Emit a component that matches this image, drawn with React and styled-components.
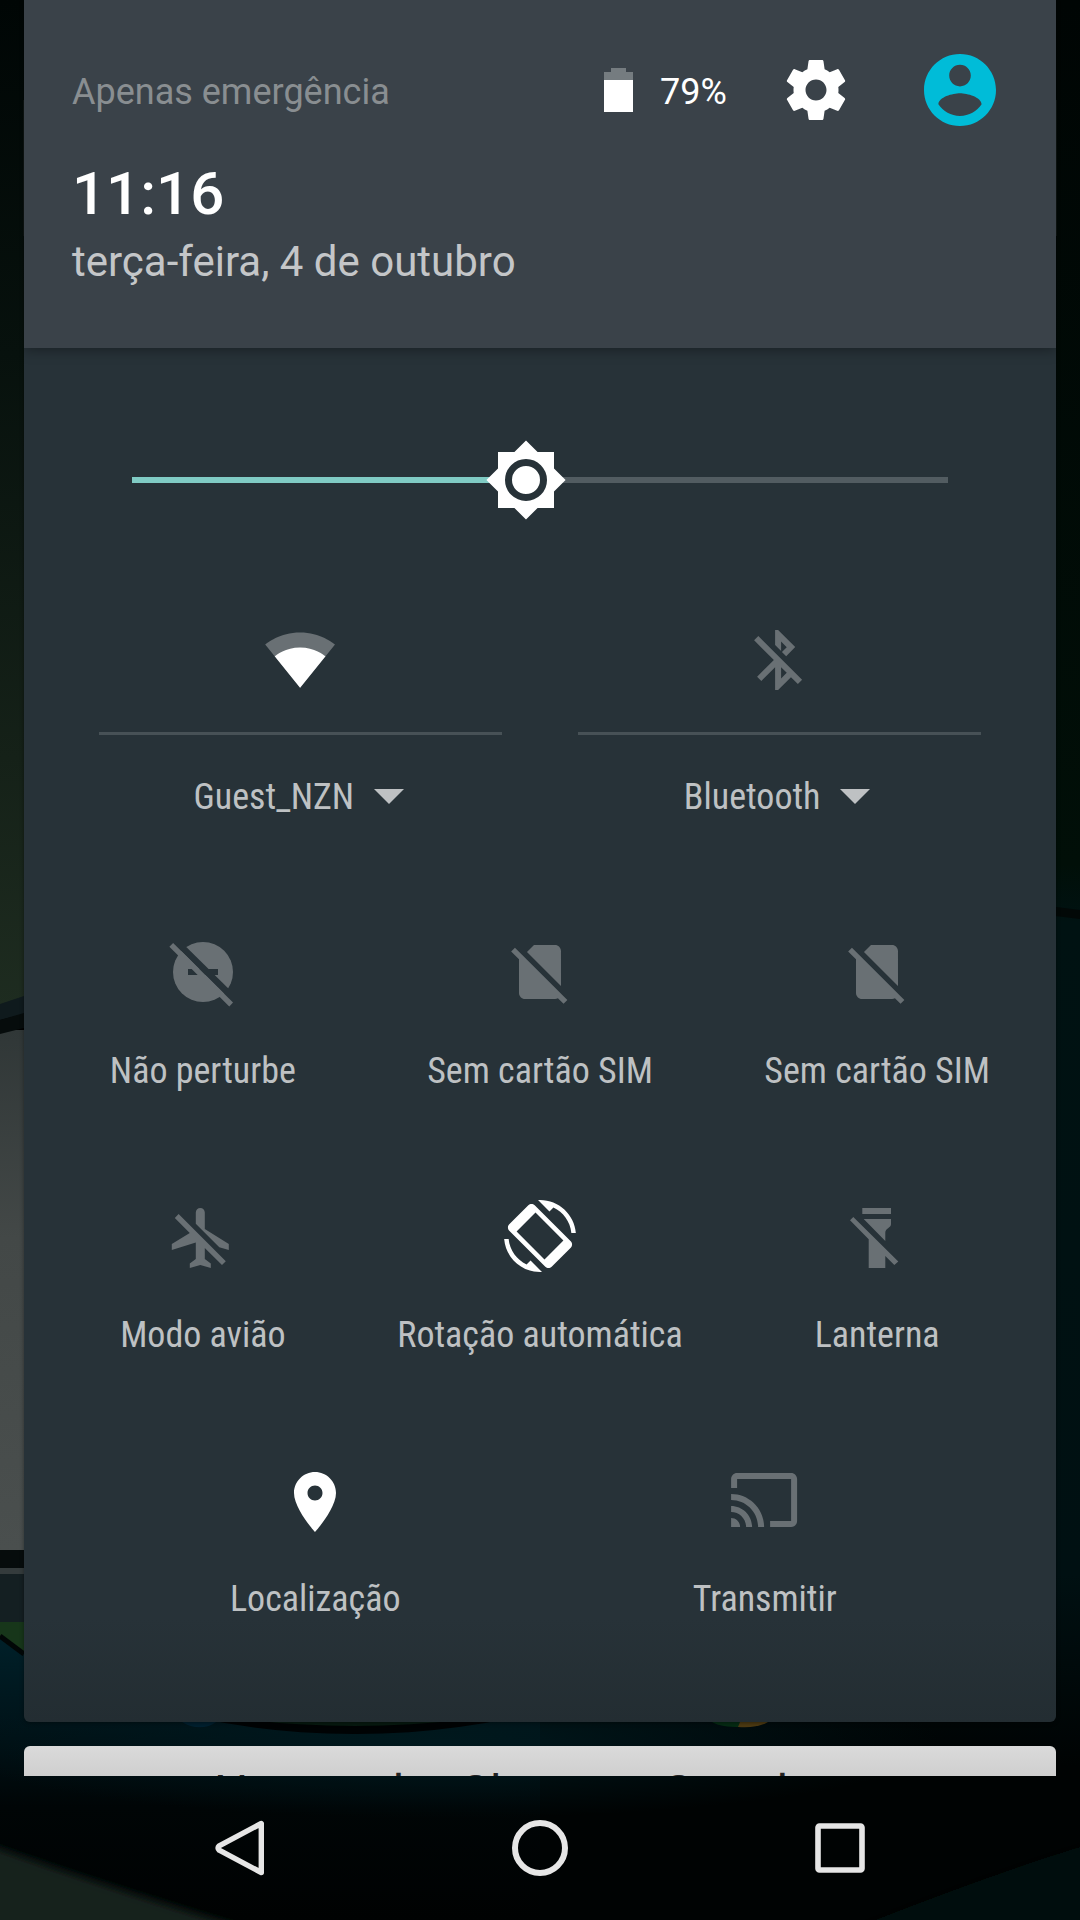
import styled, { createGlobalStyle } from 'styled-components';

const ICONS = {
	settings:
		'M19.43 12.98c.04-.32.07-.64.07-.98s-.03-.66-.07-.98l2.11-1.65c.19-.15.24-.42.12-.64l-2-3.46c-.12-.22-.39-.3-.61-.22l-2.49 1c-.52-.4-1.08-.73-1.69-.98l-.38-2.65C14.46 2.18 14.25 2 14 2h-4c-.25 0-.46.18-.49.42l-.38 2.65c-.61.25-1.17.59-1.69.98l-2.49-1c-.23-.09-.49 0-.61.22l-2 3.46c-.13.22-.07.49.12.64l2.11 1.65c-.04.32-.07.65-.07.98s.03.66.07.98l-2.11 1.65c-.19.15-.24.42-.12.64l2 3.46c.12.22.39.3.61.22l2.49-1c.52.4 1.08.73 1.69.98l.38 2.65c.03.24.24.42.49.42h4c.25 0 .46-.18.49-.42l.38-2.65c.61-.25 1.17-.59 1.69-.98l2.49 1c.23.09.49 0 .61-.22l2-3.46c.12-.22.07-.49-.12-.64l-2.11-1.65zM12 15.5c-1.93 0-3.5-1.57-3.5-3.5s1.57-3.5 3.5-3.5 3.5 1.57 3.5 3.5-1.57 3.5-3.5 3.5z',
	account:
		'M12 2C6.48 2 2 6.48 2 12s4.48 10 10 10 10-4.48 10-10S17.52 2 12 2zm0 3c1.66 0 3 1.34 3 3s-1.34 3-3 3-3-1.34-3-3 1.34-3 3-3zm0 14.2c-2.5 0-4.71-1.28-6-3.22.03-1.99 4-3.08 6-3.08 1.99 0 5.97 1.09 6 3.08-1.29 1.94-3.5 3.22-6 3.22z',
	bluetoothOff:
		'M13 5.83l1.88 1.88-1.6 1.6 1.41 1.41 3.02-3.02L12 2h-1v5.03l2 2v-3.2zM5.41 4L4 5.41 10.59 12 5 17.59 6.41 19 11 14.41V22h1l4.29-4.29 2.3 2.29L20 18.59 5.41 4zM13 18.17v-3.76l1.88 1.88L13 18.17z',
	noSim:
		'M18.99 5c0-1.1-.89-2-1.99-2h-7L7.66 5.34 19 16.68 18.99 5zM3.65 3.88L2.38 5.15 5 7.77V19c0 1.1.9 2 2 2h10.01c.35 0 .67-.1.96-.26l1.88 1.88 1.27-1.27L3.65 3.88z',
	airplaneOff:
		'M13 9V3.5c0-.83-.67-1.5-1.5-1.5S10 2.67 10 3.5v3.68l7.83 7.83L21 16v-2l-8-5zM3 5.27l4.99 4.99L2 14v2l8-2.5V19l-2 1.5V22l3.5-1 3.5 1v-1.5L13 19v-3.73L18.73 21 20 19.73 4.27 4 3 5.27z',
	rotation:
		'M16.48 2.52c3.27 1.55 5.61 4.72 5.97 8.48h1.5C23.44 4.84 18.29 0 12 0l-.66.03 3.81 3.81 1.33-1.32zM10.23 1.75c-.59-.59-1.54-.59-2.12 0L1.75 8.11c-.59.59-.59 1.54 0 2.12l12.02 12.02c.59.59 1.54.59 2.12 0l6.36-6.36c.59-.59.59-1.54 0-2.12L10.23 1.75zM13.5 19.8L4.2 10.5l6.3-6.3 9.3 9.3-6.3 6.3zM7.52 21.48C4.25 19.94 1.91 16.76 1.55 13H.05C.56 19.16 5.71 24 12 24l.66-.03-3.81-3.81-1.33 1.32z',
	place:
		'M12 2C8.13 2 5 5.13 5 9c0 5.25 7 13 7 13s7-7.75 7-13c0-3.87-3.13-7-7-7zm0 9.5c-1.38 0-2.5-1.12-2.5-2.5s1.12-2.5 2.5-2.5 2.5 1.12 2.5 2.5-1.12 2.5-2.5 2.5z',
	cast: 'M21 3H3c-1.1 0-2 .9-2 2v3h2V5h18v14h-7v2h7c1.1 0 2-.9 2-2V5c0-1.1-.9-2-2-2zM1 18v3h3c0-1.66-1.34-3-3-3zm0-4v2c2.76 0 5 2.24 5 5h2c0-3.87-3.13-7-7-7zm0-4v2c4.97 0 9 4.03 9 9h2c0-6.08-4.93-11-11-11z',
};

const GlyphIcon = ({ name, size = 72, viewBox = '0 0 24 24' }) => (
	<svg width={size} height={size} viewBox={viewBox} fill="currentColor">
		<path fillRule="evenodd" d={ICONS[name]} />
	</svg>
);

const WifiIcon = () => (
	<svg width="72" height="72" viewBox="0.3 0.2 24 24">
		<path
			fill="#697074"
			d="M12.01 21.49L23.64 7c-.45-.34-4.93-4-11.64-4C5.28 3 .81 6.66.36 7l11.63 14.49.01.01.01-.01z"
		/>
		<path
			fill="#fff"
			d="M3.53 10.95l8.46 10.54.01.01.01-.01 8.46-10.54C20.04 10.62 16.81 8 12 8c-4.81 0-8.04 2.62-8.47 2.95z"
		/>
	</svg>
);

const DndOffIcon = () => (
	<svg width="72" height="72" viewBox="0 0 24 24">
		<mask id="dnd">
			<circle cx="12" cy="12" r="10" fill="#fff" />
			<path d="M7 11h10v2H7z" fill="#000" />
			<path d="M3.3 .6L23.5 20.5 22 22.2 2.05 2.35z" fill="#000" />
			<path d="M2.05 2.35L.8 3.6 20.75 23.5 22 22.2z" fill="#fff" />
		</mask>
		<path d="M0 0h24v24H0z" fill="currentColor" mask="url(#dnd)" />
	</svg>
);

const TorchOffIcon = () => (
	<svg width="72" height="72" viewBox="0 0 72 72" fill="currentColor">
		<path d="M21.3 8H50v6H21.3zM22.7 19H50v5.3c0 3.6-5.7 4-5.7 8.4V41z" />
		<path d="M12.3 17L9 20.3l18.7 19V68h16.6V56l9 9 4-3.5z" />
	</svg>
);

const BatteryIcon = () => (
	<svg width="29" height="44" viewBox="0 0 29 44">
		<path fill="#757c80" d="M7 0h15v4h7v9H0V4h7z" />
		<path fill="#fff" d="M0 12h29v32H0z" />
	</svg>
);

const BrightnessIcon = () => (
	<svg width="84" height="84" viewBox="0 0 24 24">
		<path
			fill="#fff"
			d="M20 15.31L23.31 12 20 8.69V4h-4.69L12 .69 8.69 4H4v4.69L.69 12 4 15.31V20h4.69L12 23.31 15.31 20H20v-4.69z"
		/>
		<circle cx="12" cy="12" r="5" fill="none" stroke="#273238" strokeWidth="2" />
	</svg>
);

const Wallpaper = () => (
	<Backdrop viewBox="0 0 1080 1920">
		<defs>
			<linearGradient id="left" x1="0" y1="0" x2="0" y2="1">
				<stop offset="0" stopColor="#000605" />
				<stop offset=".35" stopColor="#07110d" />
				<stop offset=".75" stopColor="#152118" />
				<stop offset="1" stopColor="#1e2c20" />
			</linearGradient>
			<linearGradient id="grey" x1="0" y1="0" x2="0" y2="1">
				<stop offset="0" stopColor="#303737" />
				<stop offset=".4" stopColor="#434847" />
				<stop offset="1" stopColor="#4a4f4e" />
			</linearGradient>
			<linearGradient id="right" x1="0" y1="0" x2="0" y2="1">
				<stop offset="0" stopColor="#000504" />
				<stop offset=".45" stopColor="#010f08" />
				<stop offset=".48" stopColor="#001212" />
				<stop offset=".82" stopColor="#001012" />
				<stop offset=".92" stopColor="#000303" />
				<stop offset="1" stopColor="#000303" />
			</linearGradient>
			<linearGradient id="teal" x1="0" y1="0" x2="0" y2="1">
				<stop offset="0" stopColor="#002029" />
				<stop offset=".3" stopColor="#00141a" />
				<stop offset=".6" stopColor="#000506" />
				<stop offset="1" stopColor="#000202" />
			</linearGradient>
			<radialGradient id="glow">
				<stop offset="0" stopColor="#00181d" />
				<stop offset="1" stopColor="#00181d" stopOpacity="0" />
			</radialGradient>
			<filter id="soft">
				<feGaussianBlur stdDeviation="4" />
			</filter>
		</defs>
		<path fill="url(#left)" d="M0 0h540v1010H0z" />
		<path fill="url(#right)" d="M540 0h540v1920H540z" />
		<path fill="#0f1614" d="M23 100h1v136h-1zM1056 100h1v136h-1z" />
		<path fill="#020807" d="M1040 905l40 5v9l-40-5z" />
		<path fill="url(#grey)" d="M0 1030h540v520H0z" />
		<path fill="#0f1a1d" d="M0 1004l24-8v18L0 1020z" />
		<path fill="#060c0c" d="M0 1020l24-7v15L0 1034z" />
		<path fill="#060c0c" d="M0 1550h540v18H0z" />
		<path fill="#343b3c" d="M0 1568h540v6H0z" />
		<path fill="#141f22" d="M0 1574h540v48H0z" />
		<path fill="#17361a" d="M0 1622h540v40H0z" />
		<path fill="url(#teal)" d="M0 1637l24 18 516 10v255H0z" />
		<path fill="none" stroke="#020707" strokeWidth="5" d="M0 1636l24 18" />
		<ellipse cx="440" cy="1742" rx="500" ry="76" fill="url(#glow)" />
		<ellipse cx="355" cy="1640" rx="276" ry="94" fill="#000304" />
		<ellipse cx="355" cy="1640" rx="286" ry="86" fill="#071a10" />
		<path fill="#00202f" d="M182 1722h34c-8 7-24 7-34 0z" />
		<path fill="#052c14" d="M712 1722h28v5c-12 0-22-1-28-5z" />
		<path fill="#4d3a12" d="M740 1722h28c-6 4-16 6-30 5z" />
		<g filter="url(#soft)">
			<path fill="#18211e" d="M-30 1838Q90 1882 250 1930H-30z" />
			<path fill="#010c0a" d="M1110 1838Q1000 1870 850 1930h260z" />
		</g>
	</Backdrop>
);

const Tile = ({ label, on, children }) => (
	<TileBox>
		<TileIcon $on={on}>{children}</TileIcon>
		<Label>{label}</Label>
	</TileBox>
);

const DualTile = ({ label, on, children }) => (
	<DualBox>
		<TileIcon $on={on}>{children}</TileIcon>
		<Divider />
		<DualLabel>
			<Label>{label}</Label>
			<Caret />
		</DualLabel>
	</DualBox>
);

const App = () => {
	return (
		<>
			<GlobalStyle />
			<Screen>
				<Wallpaper />
				<Shade>
					<Panel>
						<Header>
							<StatusRow>
								<Carrier>Apenas emergência</Carrier>
								<BatteryIcon />
								<Percent>79%</Percent>
								<IconButton $left={54}>
									<GlyphIcon name="settings" />
								</IconButton>
								<IconButton $left={72} $color="#00bcd8">
									<GlyphIcon name="account" viewBox="2 2 20 20" />
								</IconButton>
							</StatusRow>
							<Clock>11:16</Clock>
							<DateText>terça-feira, 4 de outubro</DateText>
						</Header>
						<Body>
							<Slider>
								<Track />
								<Fill />
								<Thumb>
									<BrightnessIcon />
								</Thumb>
							</Slider>
							<DualRow>
								<DualTile label="Guest_NZN" on>
									<WifiIcon />
								</DualTile>
								<DualTile label="Bluetooth">
									<GlyphIcon name="bluetoothOff" viewBox="0.3 0 24 24" />
								</DualTile>
							</DualRow>
							<TileRow>
								<Tile label="Não perturbe">
									<DndOffIcon />
								</Tile>
								<Tile label="Sem cartão SIM">
									<GlyphIcon name="noSim" />
								</Tile>
								<Tile label="Sem cartão SIM">
									<GlyphIcon name="noSim" />
								</Tile>
							</TileRow>
							<TileRow>
								<Tile label="Modo avião">
									<GlyphIcon name="airplaneOff" viewBox="0.4 -0.7 24 24" />
								</Tile>
								<Tile label="Rotação automática" on>
									<GlyphIcon name="rotation" />
								</Tile>
								<Tile label="Lanterna">
									<TorchOffIcon />
								</Tile>
							</TileRow>
							<TileRow>
								<Tile label="Localização" on>
									<GlyphIcon name="place" viewBox="0 -0.67 24 24" />
								</Tile>
								<Tile label="Transmitir">
									<GlyphIcon name="cast" viewBox="0.3 0 24 24" />
								</Tile>
							</TileRow>
						</Body>
					</Panel>
					<Card>
						<CardText>
							<span>Nuvem do</span>
							<span>Chrome:</span>
							<span>Google</span>
						</CardText>
					</Card>
				</Shade>
				<NavBar>
					<svg width="72" height="72" viewBox="-4 0 72 72">
						<path
							d="M53.3 11.5v49L11.2 38.2q-2.4-2.2 0-4.4z"
							fill="none"
							stroke="#e6e6e6"
							strokeWidth="5.4"
							strokeLinejoin="round"
						/>
					</svg>
					<svg width="72" height="72" viewBox="0 0 72 72">
						<circle cx="36" cy="36" r="25" fill="none" stroke="#e6e6e6" strokeWidth="6" />
					</svg>
					<svg width="72" height="72" viewBox="0 0 72 72">
						<rect
							x="14"
							y="14"
							width="44"
							height="44"
							rx="1.5"
							fill="none"
							stroke="#e6e6e6"
							strokeWidth="5.6"
						/>
					</svg>
				</NavBar>
			</Screen>
		</>
	);
};

const GlobalStyle = createGlobalStyle`
	body {
		margin: 0;
		background: #000;
		font-family: Roboto, sans-serif;
	}
	svg {
		display: block;
		flex-shrink: 0;
	}
`;

const Screen = styled.div`
	position: relative;
	width: 1080px;
	height: 1920px;
	overflow: hidden;
	display: flex;
	flex-direction: column;
`;

const Backdrop = styled.svg`
	position: absolute;
	inset: 0;
	width: 1080px;
	height: 1920px;
`;

const Shade = styled.main`
	position: relative;
	height: 1776px;
	padding: 0 24px;
	overflow: hidden;
	box-sizing: border-box;
`;

const Panel = styled.section`
	height: 1722px;
	border-radius: 0 0 6px 6px;
	overflow: hidden;
	box-shadow: 0 1px 4px rgba(0, 0, 0, 0.4);
`;

const Header = styled.header`
	position: relative;
	height: 348px;
	padding: 54px 60px 0 48px;
	box-sizing: border-box;
	background: #3a4249;
	box-shadow: 0 2px 12px rgba(0, 0, 0, 0.35);
`;

const StatusRow = styled.div`
	display: flex;
	align-items: center;
	height: 72px;
	font-size: 36px;
	line-height: 42px;
`;

const Carrier = styled.span`
	flex: 1;
	padding-top: 3px;
	color: #898e91;
`;

const Percent = styled.span`
	width: 66px;
	margin-left: 27px;
	padding-top: 3px;
	color: #fff;
`;

const IconButton = styled.div`
	margin-left: ${({ $left }) => $left}px;
	color: ${({ $color }) => $color || '#fff'};
`;

const Clock = styled.div`
	margin-top: 33px;
	font-size: 60px;
	font-weight: 500;
	line-height: 70px;
	color: #fff;
`;

const DateText = styled.div`
	margin-top: 8px;
	font-size: 42px;
	line-height: 50px;
	color: #c4c6c8;
`;

const Body = styled.div`
	height: 1374px;
	padding-top: 90px;
	box-sizing: border-box;
	background: linear-gradient(#273238 1270px, #232d32);
`;

const Slider = styled.div`
	position: relative;
	display: flex;
	align-items: center;
	height: 84px;
	margin: 0 108px;
`;

const Track = styled.div`
	flex: 1;
	height: 6px;
	background: #525c61;
`;

const Fill = styled.div`
	position: absolute;
	left: 0;
	width: 394px;
	height: 6px;
	background: #80cbc4;
`;

const Thumb = styled.div`
	position: absolute;
	left: 352px;
	top: 0;
`;

const TileRow = styled.div`
	display: flex;
	justify-content: space-evenly;
	height: 264px;
`;

const DualRow = styled(TileRow)`
	height: 312px;
	margin-top: 102px;
`;

const TileBox = styled.div`
	display: flex;
	flex-direction: column;
	align-items: center;
	width: 316.5px;
`;

const DualBox = styled(TileBox)`
	width: 403px;
`;

const TileIcon = styled.div`
	color: ${({ $on }) => ($on ? '#fff' : '#697074')};
`;

const Label = styled.span`
	margin-top: 42px;
	font-family: 'Roboto Condensed', Roboto, sans-serif;
	font-stretch: 75%;
	font-size: 36px;
	line-height: 42px;
	white-space: nowrap;
	color: #bec1c3;
`;

const Divider = styled.div`
	width: 100%;
	height: 3px;
	margin-top: 36px;
	background: #475156;
`;

const DualLabel = styled.div`
	display: flex;
	align-items: center;
	gap: 20px;
	margin-top: 41px;
	padding-right: 4px;

	${Label} {
		margin-top: 0;
	}
`;

const Caret = styled.i`
	margin-bottom: 1px;
	border: 15px solid transparent;
	border-top-color: #bec1c3;
	border-bottom: 0;
`;

const Card = styled.section`
	height: 90px;
	margin-top: 24px;
	border-radius: 6px 6px 0 0;
	background: linear-gradient(#dadada, #cfcfcf 30px);
`;

const CardText = styled.div`
	display: grid;
	grid-template-columns: 245px 203px auto;
	padding: 18px 0 0 190px;
	font-size: 48px;
	line-height: 57px;
	white-space: nowrap;
	color: #222;
`;

const NavBar = styled.nav`
	position: relative;
	display: flex;
	align-items: center;
	justify-content: center;
	gap: 228px;
	height: 144px;
`;

export default App;
